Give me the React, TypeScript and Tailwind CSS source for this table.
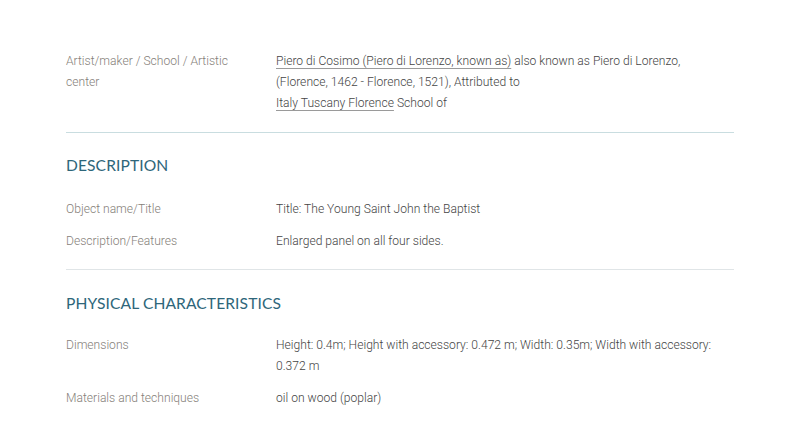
import React from "react";

const body = { fontFamily: "Roboto, 'Liberation Sans', sans-serif" };
const head = { fontFamily: "Lato, 'Noto Sans', sans-serif" };

function Row({ label, children }: { label: string; children: React.ReactNode }) {
  return (
    <div className="flex text-[12.1px] leading-[21px] font-light">
      <div className="w-[210px] shrink-0 pr-6 text-[#858079]">{label}</div>
      <div className="flex-1 text-[#444444]">{children}</div>
    </div>
  );
}

const Link = ({ children }: { children: React.ReactNode }) => (
  <span className="underline decoration-[#9a9a9a] underline-offset-[3px] decoration-1">{children}</span>
);

export default function App() {
  return (
    <div className="w-[800px] h-[435px] bg-white overflow-hidden" style={body}>
      <div className="mx-[66px] pt-[51px]">
        <div className="pb-[18px] border-b border-[#c9dde0]">
          <Row label="Artist/maker / School / Artistic center">
            <Link>Piero di Cosimo (Piero di Lorenzo, known as)</Link> also known as Piero di Lorenzo, (Florence, 1462 - Florence, 1521), Attributed to
            <br />
            <Link>Italy Tuscany Florence</Link> School of
          </Row>
        </div>
        <div className="pt-[20px] pb-[17px] border-b border-[#e0e5e7]">
          <h2 className="text-[15.6px] leading-[24px] text-[#2e667a] mb-[22px] tracking-[0.1px]" style={head}>DESCRIPTION</h2>
          <div className="flex flex-col gap-[11px]">
            <Row label="Object name/Title">Title: The Young Saint John the Baptist</Row>
            <Row label="Description/Features">Enlarged panel on all four sides.</Row>
          </div>
        </div>
        <div className="pt-[21px]">
          <h2 className="text-[15.6px] leading-[24px] text-[#2e667a] mb-[20px] tracking-[0.1px]" style={head}>PHYSICAL CHARACTERISTICS</h2>
          <div className="flex flex-col gap-[11px]">
            <Row label="Dimensions">Height: 0.4m; Height with accessory: 0.472 m; Width: 0.35m; Width with accessory: 0.372 m</Row>
            <Row label="Materials and techniques">oil on wood (poplar)</Row>
          </div>
        </div>
      </div>
    </div>
  );
}
